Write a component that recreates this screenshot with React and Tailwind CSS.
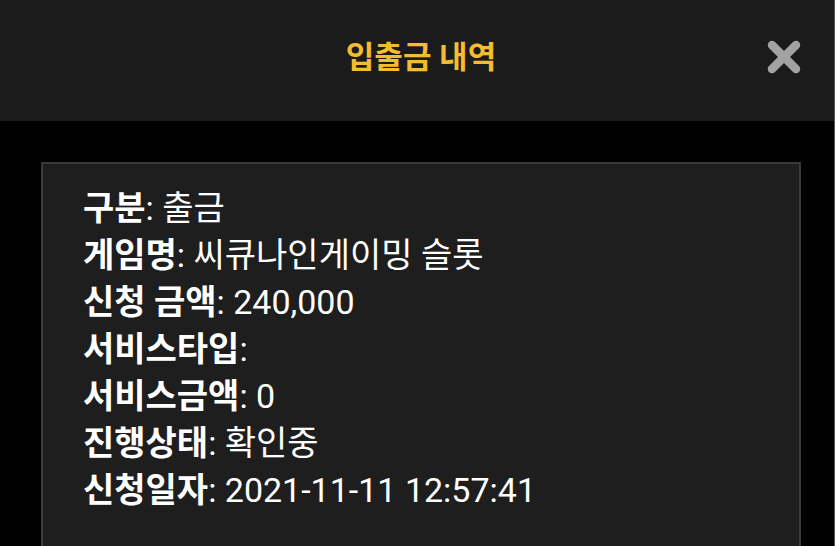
export default function App() {
  const rows = [
    ['구분', '출금'],
    ['게임명', '씨큐나인게이밍 슬롯'],
    ['신청 금액', '240,000'],
    ['서비스타입', ''],
    ['서비스금액', '0'],
    ['진행상태', '확인중'],
    ['신청일자', '2021-11-11 12:57:41'],
  ]

  return (
    <div
      className="h-screen overflow-hidden bg-black border-r border-[#555]"
      style={{ fontFamily: "Roboto, 'Noto Sans CJK KR', sans-serif" }}
    >
      <header className="relative h-[121px] bg-[#1b1b1b] flex items-center justify-center">
        <h1 className="text-[31px] font-bold text-[#f4bc30] ml-[8px] -mt-[4px]">입출금 내역</h1>
        <button className="absolute right-[32px] top-[39px] w-[36px] h-[36px]">
          <svg viewBox="0 0 36 36" className="w-full h-full">
            <path d="M6 6 L30 30 M30 6 L6 30" stroke="#a2a2a2" strokeWidth="8.5" strokeLinecap="round" />
          </svg>
        </button>
      </header>

      <div className="pl-[41px] pr-[33px] pt-[41px]">
        <div className="h-[500px] bg-[#1e1e1e] border-2 border-[#3a3a3a] pl-[40px] pt-[21px]">
          {rows.map(([label, value]) => (
            <div key={label} className="text-[34px] leading-[47px] text-white whitespace-nowrap">
              <span className="font-bold">{label}</span>
              <span>:{value && ` ${value}`}</span>
            </div>
          ))}
        </div>
      </div>
    </div>
  )
}
